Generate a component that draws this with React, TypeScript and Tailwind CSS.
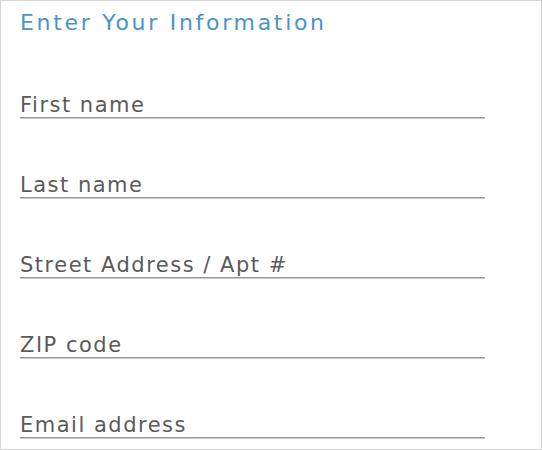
const fields = ['First name', 'Last name', 'Street Address / Apt #', 'ZIP code', 'Email address'];

export default function App() {
  return (
    <div className="w-[542px] h-[450px] bg-white border border-[#d6d6d6] overflow-hidden font-['DejaVu_Sans',sans-serif]">
      <div className="pl-[19px] w-[484px]">
        <h2 className="text-[#4a94c8] text-[22px] font-normal leading-none pt-[11px] tracking-[2.7px]">
          Enter Your Information
        </h2>
        <div className="flex flex-col mt-[5px]">
          {fields.map((f) => (
            <div key={f} className="h-[80px] flex flex-col justify-end">
              <label className="text-[#5a5a5a] text-[21px] font-normal leading-none pb-[1px] tracking-[1.5px]">
                {f}
              </label>
              <div className="h-[2px] bg-[#9a9a9a] border-b border-[#c8c8c8]" />
            </div>
          ))}
        </div>
      </div>
    </div>
  );
}
